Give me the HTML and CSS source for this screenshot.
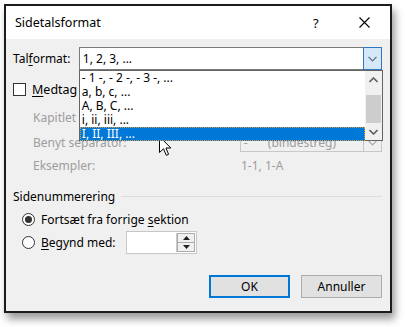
FILE: index.html
```html
<!DOCTYPE html>
<html>
<head>
<meta charset="utf-8">
<link rel="stylesheet" href="styles.css">
</head>
<body>
<div class="dialog">
  <div class="titlebar">
    <span class="title">Sidetalsformat</span>
    <span class="help">?</span>
    <svg class="close" width="11" height="11" viewBox="0 0 11 11"><path d="M0.5 0.5 L10.5 10.5 M10.5 0.5 L0.5 10.5" stroke="#000" stroke-width="1.1" fill="none"/></svg>
  </div>
  <div class="body">
    <div class="row r-fmt">
      <span class="lbl">Tal<u>f</u>ormat:</span>
      <div class="combo main">
        <span class="combo-text">1, 2, 3, ...</span>
        <span class="drop hot"><svg width="9" height="6" viewBox="0 0 9 6"><path d="M0.5 0.8 L4.5 4.8 L8.5 0.8" stroke="#5a6e82" stroke-width="1.2" fill="none"/></svg></span>
        <div class="list">
          <div class="items">
            <div class="item">- 1 -, - 2 -, - 3 -, ...</div>
            <div class="item">a, b, c, ...</div>
            <div class="item">A, B, C, ...</div>
            <div class="item">i, ii, iii, ...</div>
            <div class="item sel">I, II, III, ...</div>
          </div>
          <div class="scroll">
            <span class="arrow"><svg width="9" height="6" viewBox="0 0 9 6"><path d="M0.5 5 L4.5 1 L8.5 5" stroke="#606060" stroke-width="1.6" fill="none"/></svg></span>
            <span class="track"><span class="thumb"></span></span>
            <span class="arrow"><svg width="9" height="6" viewBox="0 0 9 6"><path d="M0.5 1 L4.5 5 L8.5 1" stroke="#606060" stroke-width="1.6" fill="none"/></svg></span>
          </div>
        </div>
      </div>
    </div>
    <div class="row r-check">
      <span class="checkbox"></span>
      <span class="check-lbl"><u>M</u>edtag</span>
    </div>
    <div class="row r-kap dim">
      <span class="ind">Kapitlet</span>
    </div>
    <div class="row r-sep dim">
      <span class="ind col1">Benyt separator:</span>
      <div class="combo sep">
        <span class="combo-text"><span class="dash">-</span>(bindestreg)</span>
        <span class="drop"><svg width="9" height="6" viewBox="0 0 9 6"><path d="M0.5 0.8 L4.5 4.8 L8.5 0.8" stroke="#a8a8a8" stroke-width="1.2" fill="none"/></svg></span>
      </div>
    </div>
    <div class="row r-ex dim">
      <span class="ind col1">Eksempler:</span>
      <span>1-1, 1-A</span>
    </div>
    <div class="row r-group">
      <span>Sidenummerering</span>
      <span class="line"></span>
    </div>
    <div class="row r-radio1">
      <span class="radio on"></span>
      <span>Fortsæt fra forrige <u>s</u>ektion</span>
    </div>
    <div class="row r-radio2">
      <span class="radio"></span>
      <span class="rlbl"><u>B</u>egynd med:</span>
      <div class="spin">
        <span class="spin-field"></span>
        <span class="spin-btns">
          <span class="sb"><svg width="7" height="4" viewBox="0 0 7 4"><path d="M0 4 L3.5 0 L7 4 Z" fill="#222"/></svg></span>
          <span class="sb"><svg width="7" height="4" viewBox="0 0 7 4"><path d="M0 0 L3.5 4 L7 0 Z" fill="#222"/></svg></span>
        </span>
      </div>
    </div>
    <div class="buttons">
      <button class="btn def">OK</button>
      <button class="btn">Annuller</button>
    </div>
  </div>
</div>
<svg class="cursor" width="13" height="21" viewBox="0 0 13 21"><path d="M0.5 0.5 L0.5 16.5 L4.5 12.8 L7.3 19.3 L9.6 18.3 L6.9 12 L11.8 12 Z" fill="#fff" stroke="#000" stroke-width="1" stroke-linejoin="miter"/></svg>
</body>
</html>
```
FILE: styles.css
```css
html, body {
  margin: 0;
  padding: 0;
  background: #fff;
}
body {
  position: relative;
  width: 405px;
  height: 327px;
  overflow: hidden;
  font-family: "Noto Sans", "Open Sans", sans-serif;
  font-size: 12px;
  color: #000;
}
u { text-decoration: underline; text-underline-offset: 2px; }

.dialog {
  margin: 4px 0 0 4px;
  width: 388px;
  height: 309px;
  box-sizing: border-box;
  border: 2px solid #1c1c1c;
  background: #f0f0f0;
  display: flex;
  flex-direction: column;
  box-shadow: 3px 6px 8px rgba(0,0,0,0.4);
}
.titlebar {
  height: 33px;
  background: #fff;
  display: flex;
  align-items: center;
  flex: none;
}
.title {
  margin-left: 9px;
  font-size: 12.5px;
  flex: 1;
  padding-bottom: 1px;
}
.help {
  font-size: 13px;
  width: 10px;
  margin-right: 36px;
}
.close {
  margin-right: 20px;
}
.body {
  flex: 1;
  display: flex;
  flex-direction: column;
  padding: 8px 8px 0 7px;
}
.row {
  display: flex;
  align-items: center;
  flex: none;
}
.r-fmt { height: 23px; position: relative; z-index: 2; }
.lbl { width: 66px; }
.combo {
  position: relative;
  display: flex;
  align-items: center;
  box-sizing: border-box;
  background: #fff;
  border: 1px solid #7a7a7a;
}
.combo.main { width: 304px; height: 23px; }
.combo-text { flex: 1; padding-left: 3px; }
.drop {
  align-self: stretch;
  width: 17px;
  display: flex;
  align-items: center;
  justify-content: center;
  border-left: 1px solid #7a7a7a;
}
.drop.hot {
  background: #d5e8f8;
  border: 1px solid #2f78be;
  margin: -1px -1px -1px 0;
}
.list {
  position: absolute;
  left: -1px;
  top: 22px;
  width: 304px;
  height: 71px;
  box-sizing: border-box;
  border: 1px solid #646464;
  background: #fff;
  display: flex;
}
.items { flex: 1; }
.item {
  height: 14px;
  line-height: 14px;
  padding-left: 2px;
  white-space: nowrap;
}
.item.sel {
  background: #0078d7;
  color: #fff;
  outline: 1px dotted #d89a3c;
  outline-offset: -1px;
}
.scroll {
  width: 17px;
  background: #f0f0f0;
  display: flex;
  flex-direction: column;
}
.arrow {
  height: 17px;
  display: flex;
  align-items: center;
  justify-content: center;
}
.track { flex: 1; position: relative; display: flex; flex-direction: column; }
.thumb {
  margin: 7px 1px 0 1px;
  flex: 1;
  background: #cdcdcd;
}

.r-check { height: 36px; }
.checkbox {
  width: 13px;
  height: 13px;
  box-sizing: border-box;
  border: 1px solid #333;
  background: #fff;
  margin-right: 6px;
  margin-top: 3px;
}
.check-lbl { font-size: 12.5px; margin-top: 2px; }
.dim { color: #9d9d9d; }
.ind { margin-left: 20px; }
.col1 { width: 208px; }
.r-kap { height: 23px; }
.r-sep { height: 26px; }
.combo.sep {
  width: 143px;
  height: 19px;
  border-color: #c8c8c8;
  background: #f0f0f0;
  margin-top: 1px;
}
.combo.sep .drop { border-left-color: #c8c8c8; }
.dash { display: inline-block; width: 24px; }
.r-ex { height: 21px; }
.r-group { height: 24px; margin-top: 8px; }
.line { flex: 1; height: 1px; background: #dcdcdc; margin-left: 6px; }
.r-radio1 { height: 22px; }
.r-radio2 { height: 24px; }
.radio {
  width: 13px;
  height: 13px;
  box-sizing: border-box;
  border: 1px solid #333;
  border-radius: 50%;
  background: #fff;
  margin-left: 9px;
  margin-right: 6px;
  display: flex;
  align-items: center;
  justify-content: center;
}
.radio.on::after {
  content: "";
  width: 7px;
  height: 7px;
  border-radius: 50%;
  background: #333;
}
.rlbl { width: 85px; }
.spin {
  width: 71px;
  height: 23px;
  box-sizing: border-box;
  border: 1px solid #c8c8c8;
  background: #fff;
  display: flex;
}
.spin-field { flex: 1; }
.spin-btns {
  width: 18px;
  display: flex;
  flex-direction: column;
  margin: 1px 1px 1px 0;
  border-left: 1px solid #c8c8c8;
}
.sb {
  flex: 1;
  display: flex;
  align-items: center;
  justify-content: center;
  background: #f0f0f0;
  border: 1px solid #adadad;
}
.sb + .sb { border-top: none; }
.buttons {
  display: flex;
  justify-content: flex-end;
  gap: 11px;
  margin-top: 21px;
}
.btn {
  width: 81px;
  height: 23px;
  box-sizing: border-box;
  background: #e1e1e1;
  border: 1px solid #adadad;
  font-family: "Noto Sans", "Open Sans", sans-serif;
  font-size: 12px;
  color: #000;
  padding: 0;
}
.btn.def { border: 2px solid #0078d7; }
.cursor {
  position: absolute;
  left: 159px;
  top: 136px;
}
```
